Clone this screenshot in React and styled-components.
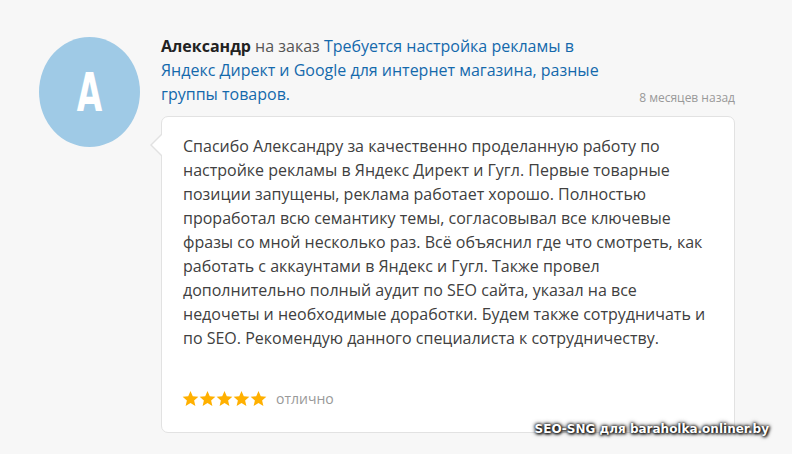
import React from "react";
import styled, { createGlobalStyle } from "styled-components";

const GlobalStyle = createGlobalStyle`
  html, body {
    margin: 0;
    padding: 0;
    background: #f7f7f7;
  }
  body {
    font-family: "Open Sans", "Noto Sans", sans-serif;
    color: #444;
  }
`;

const Page = styled.div`
  position: relative;
  width: 792px;
  height: 454px;
  overflow: hidden;
  background: #f7f7f7;
`;

const Review = styled.div`
  display: flex;
  align-items: flex-start;
  padding: 34px 0 0 39px;
`;

const Avatar = styled.div`
  flex: none;
  width: 101px;
  height: 110px;
  margin-top: 3px;
  border-radius: 50%;
  background: #9fcae6;
  display: flex;
  align-items: center;
  justify-content: center;
  color: #fff;
  font-family: "DejaVu Sans", sans-serif;
  font-weight: bold;
  font-size: 53px;
  line-height: 1;
  span {
    display: inline-block;
    transform: scaleX(0.62);
  }
`;

const Body = styled.div`
  margin-left: 21px;
  width: 574px;
`;

const Heading = styled.div`
  font-size: 16px;
  line-height: 24px;
  color: #555;
  width: 450px;
`;

const Author = styled.b`
  color: #222;
  font-weight: 700;
`;

const OrderLink = styled.a`
  color: #1469ac;
  text-decoration: none;
`;

const Time = styled.div`
  margin-top: -16px;
  text-align: right;
  font-size: 12px;
  line-height: 16px;
  color: #999;
`;

const Card = styled.div`
  position: relative;
  margin-top: 10px;
  height: 317px;
  box-sizing: border-box;
  background: #fff;
  border: 1px solid #e2e2e2;
  border-radius: 7px;
  padding: 17px 20px 0 21px;
  display: flex;
  flex-direction: column;

  &::before,
  &::after {
    content: "";
    position: absolute;
    top: 16px;
    border-style: solid;
    border-color: transparent;
  }
  &::before {
    left: -12px;
    border-width: 12px 12px 12px 0;
    border-right-color: #e2e2e2;
  }
  &::after {
    left: -10px;
    top: 17px;
    border-width: 11px 11px 11px 0;
    border-right-color: #fff;
  }
`;

const Text = styled.p`
  margin: 0;
  font-size: 16px;
  line-height: 24px;
  color: #404040;
`;

const Rating = styled.div`
  margin-top: 39px;
  display: flex;
  align-items: center;
  gap: 9px;
`;

const Stars = styled.div`
  display: flex;
  margin-left: -1px;
`;

const Star = styled.svg`
  width: 17px;
  height: 17px;
  fill: #ffb000;
`;

const RatingLabel = styled.span`
  font-size: 14px;
  color: #999;
`;

const Watermark = styled.div`
  position: absolute;
  right: 23px;
  top: 422px;
  font-family: "DejaVu Sans", sans-serif;
  font-weight: bold;
  font-size: 12px;
  color: #fff;
  text-shadow: 0 0 3px #000, 0 0 5px #000, 1px 1px 3px #000;
`;

const StarIcon = () => (
  <Star viewBox="0 0 24 24">
    <path d="M12 1.5l3.2 7.3 7.9.7-6 5.3 1.8 7.8L12 18.5l-6.9 4.1 1.8-7.8-6-5.3 7.9-.7z" />
  </Star>
);

export default function App() {
  return (
    <Page>
      <GlobalStyle />
      <Review>
        <Avatar>
          <span>A</span>
        </Avatar>
        <Body>
          <Heading>
            <Author>Александр</Author> на заказ{" "}
            <OrderLink href="#">
              Требуется настройка рекламы в Яндекс Директ и Google для интернет
              магазина, разные группы товаров.
            </OrderLink>
          </Heading>
          <Time>8 месяцев назад</Time>
          <Card>
            <Text>
              Спасибо Александру за качественно проделанную работу по настройке
              рекламы в Яндекс Директ и Гугл. Первые товарные позиции запущены,
              реклама работает хорошо. Полностью проработал всю семантику темы,
              согласовывал все ключевые фразы со мной несколько раз. Всё объяснил
              где что смотреть, как работать с аккаунтами в Яндекс и Гугл. Также
              провел дополнительно полный аудит по SEO сайта, указал на все
              недочеты и необходимые доработки. Будем также сотрудничать и по
              SEO. Рекомендую данного специалиста к сотрудничеству.
            </Text>
            <Rating>
              <Stars>
                {[0, 1, 2, 3, 4].map((i) => (
                  <StarIcon key={i} />
                ))}
              </Stars>
              <RatingLabel>отлично</RatingLabel>
            </Rating>
          </Card>
        </Body>
      </Review>
      <Watermark>SEO-SNG для baraholka.onliner.by</Watermark>
    </Page>
  );
}
